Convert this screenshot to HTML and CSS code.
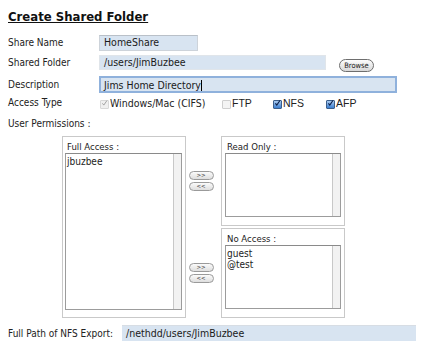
FILE: index.html
```html
<!DOCTYPE html>
<html>
<head>
<meta charset="utf-8">
<link rel="stylesheet" href="styles.css">
</head>
<body>
<div class="page">
  <h1 class="title">Create Shared Folder</h1>

  <div class="row r1">
    <div class="label">Share Name</div>
    <div class="input short">HomeShare</div>
  </div>
  <div class="row r2">
    <div class="label">Shared Folder</div>
    <div class="input folder">/users/JimBuzbee</div>
    <button class="browse">Browse</button>
  </div>
  <div class="row r3">
    <div class="label">Description</div>
    <div class="input desc focus">Jims Home Directory<span class="caret"></span></div>
  </div>
  <div class="row r4">
    <div class="label">Access Type</div>
    <div class="checks">
      <span class="check c1"><span class="box dis"><svg viewBox="0 0 10 10" width="10" height="10"><path d="M2 5.5 L4 8 L8.5 1.5" fill="none" stroke="#9a9a9a" stroke-width="1.3"/></svg></span>Windows/Mac (CIFS)</span>
      <span class="check c2"><span class="box off"></span>FTP</span>
      <span class="check c3"><span class="box on"><svg viewBox="0 0 10 10" width="10" height="10"><path d="M2 5.5 L4 8 L8.5 1.5" fill="none" stroke="#0b1f4a" stroke-width="1.6"/></svg></span>NFS</span>
      <span class="check c4"><span class="box on"><svg viewBox="0 0 10 10" width="10" height="10"><path d="M2 5.5 L4 8 L8.5 1.5" fill="none" stroke="#0b1f4a" stroke-width="1.6"/></svg></span>AFP</span>
    </div>
  </div>
  <div class="row r5">
    <div class="plabel-main">User Permissions :</div>
  </div>

  <div class="perms">
    <div class="panel full">
      <div class="plabel">Full Access :</div>
      <div class="list tall">
        <div class="items"><div>jbuzbee</div></div>
        <div class="scroll"></div>
      </div>
    </div>
    <div class="rightcol">
      <div class="prow">
        <div class="btns">
          <button class="mv">&gt;&gt;</button>
          <button class="mv">&lt;&lt;</button>
        </div>
        <div class="panel small">
          <div class="plabel">Read Only :</div>
          <div class="list">
            <div class="items"></div>
            <div class="scroll"></div>
          </div>
        </div>
      </div>
      <div class="prow">
        <div class="btns">
          <button class="mv">&gt;&gt;</button>
          <button class="mv">&lt;&lt;</button>
        </div>
        <div class="panel small">
          <div class="plabel">No Access :</div>
          <div class="list">
            <div class="items"><div>guest</div><div>@test</div></div>
            <div class="scroll"></div>
          </div>
        </div>
      </div>
    </div>
  </div>

  <div class="row export">
    <div class="elabel">Full Path of NFS Export:</div>
    <div class="input path">/nethdd/users/JimBuzbee</div>
  </div>
</div>
</body>
</html>
```

FILE: styles.css
```css
* { box-sizing: border-box; }
html, body { margin: 0; padding: 0; background: #fff; }
body {
  font-family: "DejaVu Sans Condensed", "DejaVu Sans", sans-serif;
  font-size: 10px;
  color: #222;
}
.page { padding: 0 8px; width: 424px; height: 349px; overflow: hidden; }
.title {
  font-family: "DejaVu Sans Condensed", "DejaVu Sans", sans-serif;
  font-size: 13px;
  font-weight: bold;
  text-decoration: underline;
  margin: 0;
  padding-top: 9px;
  height: 33px;
  line-height: 16px;
  color: #111;
}
.row { display: flex; align-items: center; }
.r1 { height: 19px; }
.r2 { height: 21px; }
.r3 { height: 22px; }
.r4 { height: 15px; }
.r5 { height: 26px; padding-top: 1px; }
.label { width: 91px; flex: none; white-space: nowrap; }
.plabel-main { white-space: nowrap; }
.input {
  background: #d8e4f1;
  border: 1px solid #cdd3da;
  border-top-color: #b9c0c8;
  height: 15px;
  line-height: 13px;
  padding-left: 4px;
  color: #1a1a1a;
  font-size: 10.5px;
  white-space: nowrap;
}
.short { width: 99px; height: 16px; }
.folder { width: 227px; border-color: #e0e5ea; }
.desc { width: 298px; height: 17px; line-height: 14px; }
.focus { border: 2px solid #8fb1dc; padding-left: 3px; }
.caret { display: inline-block; width: 1px; height: 11px; background: #000; vertical-align: -2px; }
.browse {
  margin-left: 13px;
  margin-top: 5px;
  width: 35px;
  height: 13px;
  padding: 0;
  border: 1px solid #6e6e6e;
  border-radius: 7px;
  background: linear-gradient(#fdfdfd, #d8d8d8);
  font-family: "DejaVu Sans Condensed", sans-serif;
  font-size: 7.5px;
  color: #222;
  line-height: 11px;
}
.checks { display: flex; align-items: center; }
.check { display: flex; align-items: center; white-space: nowrap; }
.c1 { width: 123px; padding-left: 1px; font-size: 10.5px; }
.c2 { width: 51px; font-family: "Liberation Sans", sans-serif; font-size: 10.5px; }
.c3 { width: 53px; font-family: "Liberation Sans", sans-serif; font-size: 10.5px; }
.c4 { font-family: "Liberation Sans", sans-serif; font-size: 10.5px; }
.box {
  width: 9px; height: 9px; margin-right: 1px; margin-top: 3px;
  display: inline-flex; align-items: center; justify-content: center;
  border-radius: 1px;
}
.box svg { display: block; margin-top: -2px; }
.dis { background: #f0f0f0; border: 1px solid #d8d8d8; }
.off { background: #f4f4f4; border: 1px solid #cfcfcf; }
.on { background: linear-gradient(#a9c9ee, #3b7fd1); border: 1px solid #3c5f8c; }

.perms { display: flex; margin-left: 54px; height: 183px; }
.panel {
  border: 1px solid #c9c9c9;
  padding: 0 3px 0 2px;
  display: flex;
  flex-direction: column;
}
.full { width: 124px; height: 182px; padding-bottom: 7px; }
.small { width: 124px; height: 90px; padding-bottom: 8px; padding-left: 3px; }
.plabel { height: 15px; line-height: 20px; padding-left: 2px; font-size: 9.5px; }
.list {
  flex: 1;
  border: 1px solid #9c9c9c;
  border-top-color: #8a8a8a;
  display: flex;
  margin-top: 1px;
}
.items { flex: 1; padding: 2px 1px; font-size: 10px; line-height: 11px; }
.scroll { width: 8px; border-left: 1px solid #c8c8c8; background: #f2f2f2; }
.rightcol { display: flex; flex-direction: column; gap: 2px; }
.prow { display: flex; align-items: center; }
.btns {
  width: 35px;
  display: flex; flex-direction: column; align-items: center; gap: 2px;
  padding-right: 5px;
}
.mv {
  width: 25px; height: 9px; padding: 0;
  border: 1px solid #9a9a9a; border-radius: 5px;
  background: linear-gradient(#fbfbfb, #dedede);
  font-family: "DejaVu Sans", sans-serif;
  font-size: 5.5px; line-height: 7px; color: #444;
}
.export { height: 26px; padding-top: 2px; }
.elabel { width: 114px; flex: none; white-space: nowrap; }
.path { width: 295px; height: 16px; border: none; border-top: 1px solid #d7dde4; line-height: 15px; }
```
